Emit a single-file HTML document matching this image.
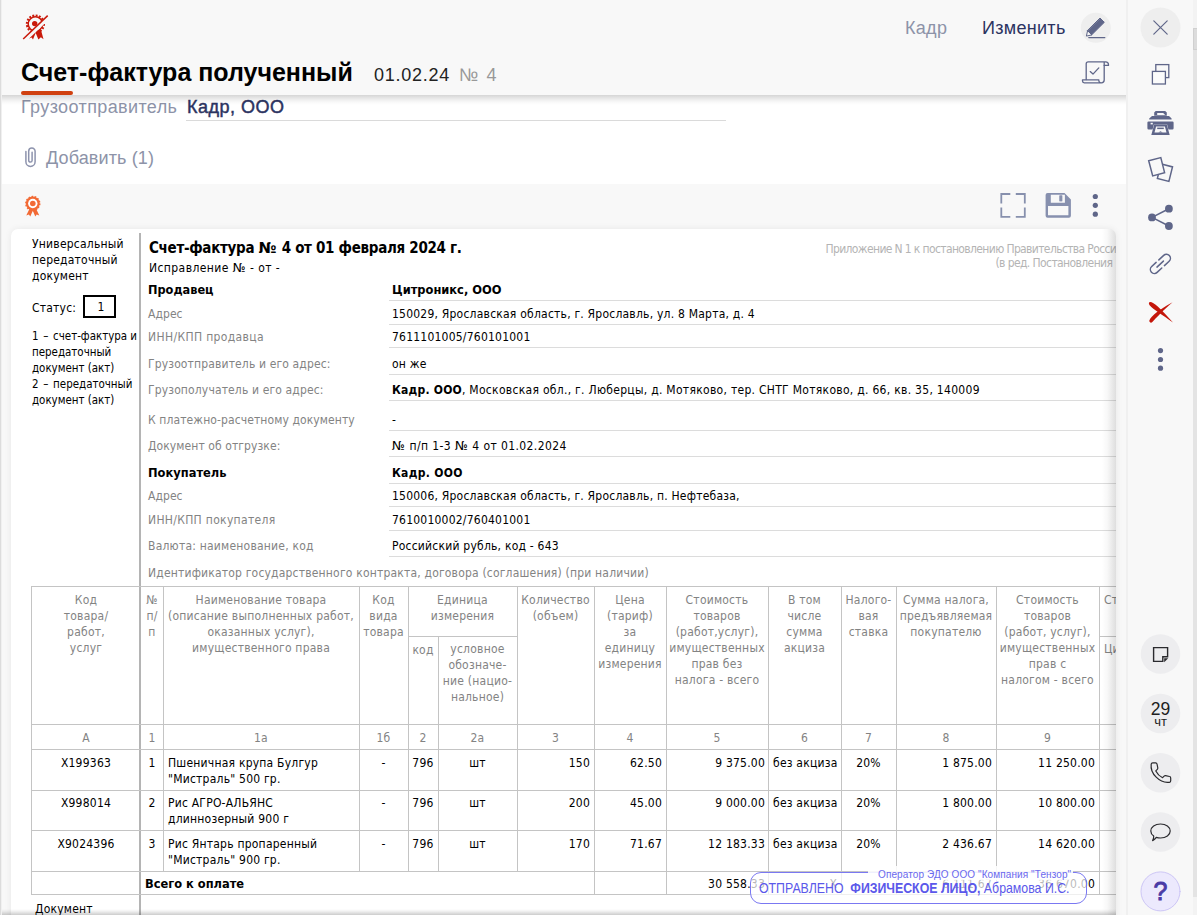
<!DOCTYPE html>
<html lang="ru">
<head>
<meta charset="utf-8">
<title>Счет-фактура полученный</title>
<style>
html,body{margin:0;padding:0}
body{width:1197px;height:915px;overflow:hidden;position:relative;background:#fff;font-family:"Liberation Sans",sans-serif;color:#000}
.abs{position:absolute}
#main{position:absolute;left:0;top:0;width:1126px;height:915px;overflow:hidden;background:#fff}
#leftedge{position:absolute;left:0;top:0;width:1px;height:915px;background:#dcdcdc;border-right:1px solid #f0f0f0;z-index:30}
#hdr{position:absolute;left:0;top:0;width:1126px;height:95px;background:#f8f8f8;z-index:20}
#hdrsh{position:absolute;left:0;top:95px;width:1126px;height:10px;z-index:19;background:linear-gradient(to bottom,rgba(0,0,0,.165),rgba(0,0,0,.11) 25%,rgba(0,0,0,.05) 55%,rgba(0,0,0,.015) 80%,rgba(0,0,0,0))}
.ui{font-family:"Liberation Sans",sans-serif;white-space:nowrap;position:absolute}
#graybg{position:absolute;left:0;top:184px;width:1126px;height:732px;background:#f8f8f8}
#card{position:absolute;left:11px;top:229px;width:1105px;height:700px;background:#fff;border-radius:7px 7px 0 0;overflow:hidden;box-shadow:0 0 7px rgba(0,0,0,.07)}
#cardshadow{position:absolute;right:0;top:0;width:14px;height:100%;background:linear-gradient(to right,rgba(0,0,0,0),rgba(0,0,0,.03) 40%,rgba(0,0,0,.13));z-index:5}
.d{position:absolute;white-space:nowrap;font:12px/16px "DejaVu Sans Condensed","DejaVu Sans","Liberation Sans",sans-serif;letter-spacing:.22px;color:#000}
.g{color:#838383}
.b{font-weight:bold}
.hl{position:absolute;height:1px;background:#dcdcdc;left:378px;width:740px}
#side{position:absolute;left:1126px;top:0;width:71px;height:915px;background:#f8f8f8;border-left:2px solid #f0f0f0;box-sizing:border-box}
.circ{position:absolute;width:40px;height:40px;border-radius:50%;background:#eeeeee}
</style>
</head>
<body>
<div id="main">
  <div id="graybg"></div>

  <!-- white band: consignor + attachments -->
  <div class="ui" style="left:21px;top:97px;font-size:18px;line-height:21px;color:#8d93a8;letter-spacing:.38px">Грузоотправитель</div>
  <div class="ui" style="left:187px;top:97px;font-size:18px;line-height:21px;color:#2b3361;letter-spacing:.5px;-webkit-text-stroke:.45px #2b3361">Кадр, ООО</div>
  <div class="abs" style="left:186px;top:120px;width:540px;height:1px;background:#dadada"></div>
  <div class="ui" style="left:46px;top:148px;font-size:18px;line-height:21px;color:#8d93a8;letter-spacing:.12px">Добавить (1)</div>

<!--ICONS-MAIN-->
<svg class="abs" style="left:0;top:130px;z-index:3" width="1127" height="100" viewBox="0 130 1127 100" fill="none" stroke-linecap="round" stroke-linejoin="round">
  <!-- paperclip -->
  <path d="M25.900 151.600 V161.800 a4.600 4.600 0 0 0 9.200 0 V151.200 a3.200 3.200 0 0 0 -6.400 0 V160.400 a1.700 1.700 0 0 0 3.400 0 V152.200" stroke="#8d93ad" stroke-width="1.500"/>
  <!-- orange rosette -->
  <g fill="#f26a35" stroke="none">
    <path d="M29.600 208.600 L26.300 215.500 L28.900 214.600 L30.300 216.400 L33 210.300Z"/>
    <path d="M36 208.600 L39.300 215.500 L36.700 214.600 L35.300 216.400 L32.600 210.300Z"/>
  </g>
  <circle cx="32.800" cy="203.500" r="6.900" fill="#f26a35" stroke="#f26a35" stroke-width="1.600" stroke-dasharray="1.700 1.400" stroke-linecap="butt"/>
  <circle cx="32.800" cy="203.500" r="4.700" fill="#ffffff"/>
  <circle cx="32.800" cy="203.500" r="2.800" fill="#f26a35"/>
  <!-- fullscreen -->
  <path d="M1001.300 203.500 V194 H1010.300 M1015.800 194 H1024.800 V203.500 M1024.800 207.500 V216.800 H1015.800 M1010.300 216.800 H1001.300 V207.500" stroke="#8790ad" stroke-width="1.800" stroke-linecap="butt" stroke-linejoin="miter"/>
  <!-- save -->
  <path fill-rule="evenodd" fill="#8790ae" stroke="none" d="M1047.600 193 H1064.500 L1070.900 199.400 V215.800 a2 2 0 0 1 -2 2 H1047.600 a2 2 0 0 1 -2 -2 V195 a2 2 0 0 1 2 -2Z M1050.800 194.800 V202.800 H1064.900 V194.800Z M1059.500 195.500 H1062.200 V201.200 H1059.500Z M1048 206 V215.200 H1068.400 V206Z"/>
  <rect x="1059.500" y="195.500" width="2.700" height="5.700" fill="#8790ae"/>
  <!-- dots -->
  <g fill="#5f6689"><circle cx="1095.300" cy="196.500" r="2.600"/><circle cx="1095.300" cy="205.300" r="2.600"/><circle cx="1095.300" cy="214.200" r="2.600"/></g>
</svg>
  <!-- document card -->
  <div id="card">
    <div id="cardshadow"></div>
    <div id="doc" class="abs" style="left:-11px;top:-229px;width:1300px;height:1000px">
<!--DOCSTART-->
<div class="d " style="left:32px;top:236px;">Универсальный<br>передаточный<br>документ</div>
<div class="d " style="left:32px;top:300px;">Статус:</div>
<div class="d" style="left:83px;top:295px;width:29px;height:19px;border:2px solid #000;text-align:center;line-height:21px;text-indent:3px">1</div>
<div class="d " style="left:32px;top:328px;letter-spacing:0;transform-origin:0 0;transform:scaleX(.953)"><span style="word-spacing:1.5px">1 – </span>счет-фактура и<br>передаточный<br>документ (акт)<br><span style="word-spacing:1.5px">2 – </span>передаточный<br>документ (акт)</div>
<div class="abs" style="left:139px;top:233px;width:2px;height:707px;background:#b4b4b4"></div>
<div class="d b" style="left:149px;top:238.5px;font-size:15px;line-height:18px;letter-spacing:-.3px">Счет-фактура <span style="font-family:'DejaVu Sans',sans-serif;letter-spacing:.6px">№</span> 4 от 01 февраля 2024 г.</div>
<div class="d " style="left:149px;top:259.5px;letter-spacing:.42px">Исправление <span style="font-family:'DejaVu Sans',sans-serif;font-size:12.5px;letter-spacing:.6px">№</span> - от -</div>
<div class="d" style="left:825.5px;top:242.3px;font-size:12px;line-height:14px;color:#b4b4b4;letter-spacing:-.63px">Приложение N 1 к постановлению Правительства Российской Федерации от 26 декабря 2011 г. N 1137</div>
<div class="d" style="left:995.5px;top:256px;font-size:12px;line-height:14px;color:#b4b4b4;letter-spacing:-.6px">(в ред. Постановления &nbsp;Правительства РФ от 02.04.2021 N 534)</div>
<div class="d " style="left:148px;top:281.5px;letter-spacing:0px"><b style="display:inline-block;font-family:'DejaVu Sans',sans-serif;letter-spacing:0;transform-origin:0 50%;transform:scaleX(0.945)">Продавец</b></div>
<div class="d " style="left:392px;top:281.5px;"><b style="display:inline-block;font-family:'DejaVu Sans',sans-serif;letter-spacing:0;transform-origin:0 50%;transform:scaleX(0.955)">Цитроникс, ООО</b></div>
<div class="abs" style="left:389px;top:300px;width:911px;height:1px;background:#dcdcdc"></div>
<div class="d g" style="left:148px;top:306px;letter-spacing:0.06px">Адрес</div>
<div class="d " style="left:392px;top:306px;">150029, Ярославская область, г. Ярославль, ул. 8 Марта, д. 4</div>
<div class="abs" style="left:389px;top:324px;width:911px;height:1px;background:#dcdcdc"></div>
<div class="d g" style="left:148px;top:329px;letter-spacing:0.36px">ИНН/КПП продавца</div>
<div class="d " style="left:392px;top:329px;">7611101005/760101001</div>
<div class="abs" style="left:389px;top:347px;width:911px;height:1px;background:#dcdcdc"></div>
<div class="d g" style="left:148px;top:355.5px;letter-spacing:0.14px">Грузоотправитель и его адрес:</div>
<div class="d " style="left:392px;top:355.5px;">он же</div>
<div class="abs" style="left:389px;top:374px;width:911px;height:1px;background:#dcdcdc"></div>
<div class="d g" style="left:148px;top:382px;letter-spacing:0.14px">Грузополучатель и его адрес:</div>
<div class="d " style="left:392px;top:382px;"><b style="letter-spacing:0.22px">Кадр. ООО</b><span style="letter-spacing:.29px">, Московская обл., г. Люберцы, д. Мотяково, тер. СНТГ Мотяково, д. 66, кв. 35, 140009</span></div>
<div class="abs" style="left:389px;top:400px;width:911px;height:1px;background:#dcdcdc"></div>
<div class="d g" style="left:148px;top:411.7px;letter-spacing:0.1px">К платежно-расчетному документу</div>
<div class="d " style="left:392px;top:411.7px;">-</div>
<div class="abs" style="left:389px;top:430px;width:911px;height:1px;background:#dcdcdc"></div>
<div class="d g" style="left:148px;top:437.7px;letter-spacing:0.09px">Документ об отгрузке:</div>
<div class="d " style="left:392px;top:437.7px;"><span style="letter-spacing:.4px"><span style="font-family:'DejaVu Sans',sans-serif;font-size:12.5px;letter-spacing:.6px">№</span> п/п 1-3 <span style="font-family:'DejaVu Sans',sans-serif;font-size:12.5px;letter-spacing:.6px">№</span> 4 от 01.02.2024</span></div>
<div class="abs" style="left:389px;top:456px;width:911px;height:1px;background:#dcdcdc"></div>
<div class="d " style="left:148px;top:464.5px;letter-spacing:0px"><b style="display:inline-block;font-family:'DejaVu Sans',sans-serif;letter-spacing:0;transform-origin:0 50%;transform:scaleX(0.956)">Покупатель</b></div>
<div class="d " style="left:392px;top:464.5px;"><b style="letter-spacing:0.3px">Кадр. ООО</b></div>
<div class="abs" style="left:389px;top:483px;width:911px;height:1px;background:#dcdcdc"></div>
<div class="d g" style="left:148px;top:487.7px;letter-spacing:0.06px">Адрес</div>
<div class="d " style="left:392px;top:487.7px;">150006, Ярославская область, г. Ярославль, п. Нефтебаза,</div>
<div class="abs" style="left:389px;top:506px;width:911px;height:1px;background:#dcdcdc"></div>
<div class="d g" style="left:148px;top:511.5px;letter-spacing:0.31px">ИНН/КПП покупателя</div>
<div class="d " style="left:392px;top:511.5px;">7610010002/760401001</div>
<div class="abs" style="left:389px;top:530px;width:911px;height:1px;background:#dcdcdc"></div>
<div class="d g" style="left:148px;top:537.7px;letter-spacing:0.22px">Валюта: наименование, код</div>
<div class="d " style="left:392px;top:537.7px;">Российский рубль, код - 643</div>
<div class="abs" style="left:389px;top:556px;width:911px;height:1px;background:#dcdcdc"></div>
<div class="d g" style="left:148px;top:564.7px;letter-spacing:0.19px">Идентификатор государственного контракта, договора (соглашения) (при наличии)</div>
<div class="abs" style="left:31px;top:586px;width:1269px;height:1px;background:#c4c4c4"></div>
<div class="abs" style="left:31px;top:724px;width:1269px;height:1px;background:#c4c4c4"></div>
<div class="abs" style="left:31px;top:749px;width:1269px;height:1px;background:#c4c4c4"></div>
<div class="abs" style="left:31px;top:790px;width:1269px;height:1px;background:#c4c4c4"></div>
<div class="abs" style="left:31px;top:830px;width:1269px;height:1px;background:#c4c4c4"></div>
<div class="abs" style="left:31px;top:871px;width:1269px;height:1px;background:#c4c4c4"></div>
<div class="abs" style="left:31px;top:894px;width:1269px;height:1px;background:#c4c4c4"></div>
<div class="abs" style="left:408px;top:636px;width:109px;height:1px;background:#c4c4c4"></div>
<div class="abs" style="left:1099px;top:636px;width:201px;height:1px;background:#c4c4c4"></div>
<div class="abs" style="left:31px;top:586px;width:1px;height:309px;background:#c4c4c4"></div>
<div class="abs" style="left:163px;top:586px;width:1px;height:285px;background:#c4c4c4"></div>
<div class="abs" style="left:359px;top:586px;width:1px;height:285px;background:#c4c4c4"></div>
<div class="abs" style="left:408px;top:586px;width:1px;height:285px;background:#c4c4c4"></div>
<div class="abs" style="left:517px;top:586px;width:1px;height:285px;background:#c4c4c4"></div>
<div class="abs" style="left:594px;top:586px;width:1px;height:309px;background:#c4c4c4"></div>
<div class="abs" style="left:666px;top:586px;width:1px;height:309px;background:#c4c4c4"></div>
<div class="abs" style="left:768px;top:586px;width:1px;height:309px;background:#c4c4c4"></div>
<div class="abs" style="left:841px;top:586px;width:1px;height:309px;background:#c4c4c4"></div>
<div class="abs" style="left:896px;top:586px;width:1px;height:309px;background:#c4c4c4"></div>
<div class="abs" style="left:996px;top:586px;width:1px;height:309px;background:#c4c4c4"></div>
<div class="abs" style="left:1099px;top:586px;width:1px;height:309px;background:#c4c4c4"></div>
<div class="abs" style="left:438px;top:636px;width:1px;height:235px;background:#c4c4c4"></div>
<div class="d g" style="left:32px;top:592px;width:108px;text-align:center;">Код<br>товара/<br>работ,<br>услуг</div>
<div class="d g" style="left:141px;top:592px;width:22px;text-align:center;">№<br>п/<br>п</div>
<div class="d g" style="left:163px;top:592px;width:196px;text-align:center;">Наименование товара<br>(описание выполненных работ,<br>оказанных услуг),<br>имущественного права</div>
<div class="d g" style="left:359px;top:592px;width:49px;text-align:center;">Код<br>вида<br>товара</div>
<div class="d g" style="left:408px;top:592px;width:109px;text-align:center;">Единица<br>измерения</div>
<div class="d g" style="left:408px;top:642px;width:30px;text-align:center;">код</div>
<div class="d g" style="left:438px;top:641px;width:79px;text-align:center;">условное<br>обозначе-<br>ние (нацио-<br>нальное)</div>
<div class="d g" style="left:517px;top:592px;width:77px;text-align:center;">Количество<br>(объем)</div>
<div class="d g" style="left:594px;top:592px;width:72px;text-align:center;">Цена<br>(тариф)<br>за<br>единицу<br>измерения</div>
<div class="d g" style="left:666px;top:592px;width:102px;text-align:center;">Стоимость<br>товаров<br>(работ,услуг),<br>имущественных<br>прав без<br>налога - всего</div>
<div class="d g" style="left:768px;top:592px;width:73px;text-align:center;">В том<br>числе<br>сумма<br>акциза</div>
<div class="d g" style="left:841px;top:592px;width:55px;text-align:center;">Налого-<br>вая<br>ставка</div>
<div class="d g" style="left:896px;top:592px;width:100px;text-align:center;">Сумма налога,<br>предъявляемая<br>покупателю</div>
<div class="d g" style="left:996px;top:592px;width:103px;text-align:center;">Стоимость<br>товаров<br>(работ, услуг),<br>имущественных<br>прав с<br>налогом - всего</div>
<div class="d g" style="left:1104px;top:592px;width:156px;text-align:left;">Страна происхождения товара</div>
<div class="d g" style="left:1104px;top:641px;width:76px;text-align:left;">Цифровой код</div>
<div class="d g" style="left:32px;top:730px;width:108px;text-align:center;">А</div>
<div class="d g" style="left:141px;top:730px;width:22px;text-align:center;">1</div>
<div class="d g" style="left:163px;top:730px;width:196px;text-align:center;">1а</div>
<div class="d g" style="left:359px;top:730px;width:49px;text-align:center;">1б</div>
<div class="d g" style="left:408px;top:730px;width:30px;text-align:center;">2</div>
<div class="d g" style="left:438px;top:730px;width:79px;text-align:center;">2а</div>
<div class="d g" style="left:517px;top:730px;width:77px;text-align:center;">3</div>
<div class="d g" style="left:594px;top:730px;width:72px;text-align:center;">4</div>
<div class="d g" style="left:666px;top:730px;width:102px;text-align:center;">5</div>
<div class="d g" style="left:768px;top:730px;width:73px;text-align:center;">6</div>
<div class="d g" style="left:841px;top:730px;width:55px;text-align:center;">7</div>
<div class="d g" style="left:896px;top:730px;width:100px;text-align:center;">8</div>
<div class="d g" style="left:996px;top:730px;width:103px;text-align:center;">9</div>
<div class="d g" style="left:1099px;top:730px;width:81px;text-align:center;">10</div>
<div class="d " style="left:32px;top:755px;width:108px;text-align:center;">Х199363</div>
<div class="d " style="left:141px;top:755px;width:22px;text-align:center;">1</div>
<div class="d " style="left:168px;top:755px;width:186px;text-align:left;">Пшеничная крупа Булгур<br>"Мистраль" 500 гр.</div>
<div class="d " style="left:359px;top:755px;width:49px;text-align:center;">-</div>
<div class="d " style="left:408px;top:755px;width:30px;text-align:center;">796</div>
<div class="d " style="left:438px;top:755px;width:79px;text-align:center;">шт</div>
<div class="d " style="left:521px;top:755px;width:69px;text-align:right;">150</div>
<div class="d " style="left:598px;top:755px;width:64px;text-align:right;">62.50</div>
<div class="d " style="left:669px;top:755px;width:96px;text-align:right;">9 375.00</div>
<div class="d " style="left:773px;top:755px;width:63px;text-align:left;">без акциза</div>
<div class="d " style="left:841px;top:755px;width:55px;text-align:center;">20%</div>
<div class="d " style="left:900px;top:755px;width:92px;text-align:right;">1 875.00</div>
<div class="d " style="left:1000px;top:755px;width:95px;text-align:right;">11 250.00</div>
<div class="d " style="left:1099px;top:755px;width:81px;text-align:center;">643</div>
<div class="d " style="left:32px;top:795px;width:108px;text-align:center;">Х998014</div>
<div class="d " style="left:141px;top:795px;width:22px;text-align:center;">2</div>
<div class="d " style="left:168px;top:795px;width:186px;text-align:left;">Рис АГРО-АЛЬЯНС<br>длиннозерный 900 г</div>
<div class="d " style="left:359px;top:795px;width:49px;text-align:center;">-</div>
<div class="d " style="left:408px;top:795px;width:30px;text-align:center;">796</div>
<div class="d " style="left:438px;top:795px;width:79px;text-align:center;">шт</div>
<div class="d " style="left:521px;top:795px;width:69px;text-align:right;">200</div>
<div class="d " style="left:598px;top:795px;width:64px;text-align:right;">45.00</div>
<div class="d " style="left:669px;top:795px;width:96px;text-align:right;">9 000.00</div>
<div class="d " style="left:773px;top:795px;width:63px;text-align:left;">без акциза</div>
<div class="d " style="left:841px;top:795px;width:55px;text-align:center;">20%</div>
<div class="d " style="left:900px;top:795px;width:92px;text-align:right;">1 800.00</div>
<div class="d " style="left:1000px;top:795px;width:95px;text-align:right;">10 800.00</div>
<div class="d " style="left:1099px;top:795px;width:81px;text-align:center;">643</div>
<div class="d " style="left:32px;top:835.7px;width:108px;text-align:center;">Х9024396</div>
<div class="d " style="left:141px;top:835.7px;width:22px;text-align:center;">3</div>
<div class="d " style="left:168px;top:835.7px;width:186px;text-align:left;">Рис Янтарь пропаренный<br>"Мистраль" 900 гр.</div>
<div class="d " style="left:359px;top:835.7px;width:49px;text-align:center;">-</div>
<div class="d " style="left:408px;top:835.7px;width:30px;text-align:center;">796</div>
<div class="d " style="left:438px;top:835.7px;width:79px;text-align:center;">шт</div>
<div class="d " style="left:521px;top:835.7px;width:69px;text-align:right;">170</div>
<div class="d " style="left:598px;top:835.7px;width:64px;text-align:right;">71.67</div>
<div class="d " style="left:669px;top:835.7px;width:96px;text-align:right;">12 183.33</div>
<div class="d " style="left:773px;top:835.7px;width:63px;text-align:left;">без акциза</div>
<div class="d " style="left:841px;top:835.7px;width:55px;text-align:center;">20%</div>
<div class="d " style="left:900px;top:835.7px;width:92px;text-align:right;">2 436.67</div>
<div class="d " style="left:1000px;top:835.7px;width:95px;text-align:right;">14 620.00</div>
<div class="d " style="left:1099px;top:835.7px;width:81px;text-align:center;">643</div>
<div class="d" style="left:145px;top:876px"><b style="display:inline-block;font-family:'DejaVu Sans',sans-serif;letter-spacing:0;transform-origin:0 50%;transform:scaleX(0.953)">Всего к оплате</b></div>
<div class="d " style="left:669px;top:876px;width:96px;text-align:right;">30 558.33</div>
<div class="d " style="left:772px;top:876px;width:65px;text-align:right;">Х</div>
<div class="d " style="left:900px;top:876px;width:92px;text-align:right;">6 111.67</div>
<div class="d " style="left:1000px;top:876px;width:95px;text-align:right;">36 670.00</div>
<div class="d " style="left:35px;top:901px;">Документ</div>
<!-- stamp -->
<div class="abs" style="left:750px;top:872px;width:335px;height:30px;border:1px solid #7a78f2;border-radius:11px;background:rgba(255,255,255,.72);z-index:8"></div>
<div class="abs" style="left:868px;top:866px;width:205px;height:14px;background:rgba(255,255,255,.88);border-radius:5px;z-index:9"></div>
<div class="abs" style="left:878px;top:869px;z-index:10;white-space:nowrap;font:10px/12px 'Liberation Sans',sans-serif;color:#6a68ee;letter-spacing:.1px">Оператор ЭДО ООО "Компания "Тензор"</div>
<div class="abs" style="left:759px;top:878.5px;z-index:10;white-space:nowrap;font:15px/18px 'Liberation Sans',sans-serif;color:#5b58ea;transform-origin:0 0;transform:scaleX(.822)">ОТПРАВЛЕНО&nbsp; <b>ФИЗИЧЕСКОЕ ЛИЦО,</b> Абрамова И.С.</div>
<!--DOCEND-->
    </div>
  </div>

  <div class="abs" style="left:0;top:909px;width:1116px;height:6px;z-index:15;background:linear-gradient(to bottom,rgba(0,0,0,0),rgba(0,0,0,.05) 35%,rgba(0,0,0,.2))"></div>
  <div id="hdrsh"></div>
  <div id="hdr">
    <!--ICONS-HDR-->
<svg class="abs" style="left:0;top:0" width="1127" height="95" viewBox="0 0 1127 95" fill="none" stroke-linecap="round" stroke-linejoin="round">
  <!-- crossed rosette -->
  <g fill="#c9190a" stroke="none">
    <path d="M32.500 30.500 L35.800 32.500 L33 39.600 L31.600 37.600 L29 38.600Z"/>
    <path d="M36.400 30.800 L40.800 29.300 L43.500 39.200 L40.900 37.300 L38.400 39.500 L35.600 32.800Z"/>
  </g>
  <circle cx="35.400" cy="24" r="8.500" stroke="#c9190a" stroke-width="2.200" stroke-dasharray="1.900 1.440" stroke-linecap="butt"/>
  <circle cx="35.400" cy="24" r="7.200" stroke="#c9190a" stroke-width="1.500"/>
  <circle cx="34.700" cy="23.600" r="2.700" fill="#c9190a"/>
  <path d="M24.700 40.100 L49.200 16.700" stroke="#f8f8f8" stroke-width="3.800" stroke-linecap="butt"/>
  <path d="M23.200 39 L47.700 15.600" stroke="#c9190a" stroke-width="1.500" stroke-linecap="butt"/>
  <!-- pencil -->
  <circle cx="1095.800" cy="27.800" r="15" fill="#eeeeee"/>
  <path d="M1100.300 18.300 L1104.300 22.300 L1091.500 35 L1087.500 31Z" fill="#5f6689" stroke="#5f6689" stroke-width="1"/>
  <path d="M1087.500 31 L1086.400 36.100 L1091.500 35Z" fill="#f4f4f4" stroke="#5f6689" stroke-width="1"/>
  <path d="M1088.800 37.600 H1104.800" stroke="#5f6689" stroke-width="1.300"/>
  <!-- scroll with check -->
  <g stroke="#5f6689" stroke-width="1.300">
    <path d="M1086.200 79.600 V63.800 a2 2 0 0 1 2 -2 H1105.500 a3 3 0 0 1 3 3 V65.400 H1104.200 V61.900"/>
    <path d="M1104.200 65.400 V80 a2.800 2.800 0 0 1 -2.800 2.800 H1084.300 a1.800 1.800 0 0 1 -1.800 -1.800 V79.800 H1098.800 V80.600 a2.200 2.200 0 0 0 2.200 2.200"/>
    <path d="M1090.200 71.600 L1093 74.100 L1098.800 67.900"/>
  </g>
</svg>
    <div class="ui" style="left:21px;top:57.8px;font-size:25px;line-height:28px;font-weight:bold;letter-spacing:0;color:#000">Счет-фактура полученный</div>
    <div class="abs" style="left:21px;top:91px;width:52px;height:4px;border-radius:2px;background:#d0400f"></div>
    <div class="ui" style="left:374px;top:64.5px;font-size:18px;line-height:21px;color:#222;letter-spacing:.75px">01.02.24</div>
    <div class="ui" style="left:459px;top:64.5px;font-size:18px;line-height:21px;color:#999;letter-spacing:1.6px">№ 4</div>
    <div class="ui" style="left:905px;top:18px;font-size:18px;line-height:21px;color:#8d93a8;letter-spacing:.3px">Кадр</div>
    <div class="ui" style="left:982px;top:18px;font-size:18px;line-height:21px;color:#2b3361;letter-spacing:.3px">Изменить</div>
  </div>
</div>
<div id="leftedge"></div>

<div id="side">
<!--SIDESTART-->
<svg class="abs" style="left:-1px;top:0" width="70" height="915" viewBox="1127 0 70 915" fill="none" stroke="#5f6689" stroke-width="1.3" stroke-linecap="round" stroke-linejoin="round">
  <!-- close -->
  <circle cx="1160.500" cy="27.500" r="20" fill="#eeeeee" stroke="none"/>
  <path d="M1153.800 20.800 L1167.200 34.200 M1167.200 20.800 L1153.800 34.200" stroke-width="1.200"/>
  <!-- copy -->
  <rect x="1155.8" y="64.6" width="13" height="13" stroke-linejoin="miter"/>
  <rect x="1152.4" y="71.4" width="13" height="12.6" fill="#fbfbfb" stroke-linejoin="miter"/>
  <!-- printer -->
  <g stroke="none" fill="#5f6689">
    <path d="M1155.6 111 h9.6 l1.6 1.4 v3.4 h-12.6 v-3.4z"/>
    <path d="M1157.2 113 h6 l2 2 h-8z" fill="#f8f8f8"/>
    <path d="M1152 116 h17 l2.6 2.4 v1.2 h-22.4 v-1.2z"/>
    <path d="M1148.6 121.4 h23.8 a1.2 1.2 0 0 1 1.2 1.2 v5.6 a1.2 1.2 0 0 1 -1.2 1.2 h-4 l-1.3-5 h-13.2 l-1.3 5 h-4 a1.2 1.2 0 0 1 -1.2-1.2 v-5.6 a1.2 1.2 0 0 1 1.2-1.2z"/>
    <rect x="1150.6" y="122.8" width="2.2" height="1.6" fill="#f8f8f8"/>
    <path d="M1154.200 124.600 h12.600 l2.900 10.400 h-18.400z M1156.100 126.600 l-1.600 5.900 h12 l-1.600 -5.900z" fill-rule="evenodd"/>
    <rect x="1157.200" y="127.600" width="6.600" height="1.500"/>
    <path d="M1158.300 132.600 l2.200 -1.300 l2.200 1.300z"/>
  </g>
  <!-- pages -->
  <path d="M1162.400 164.300 L1172.500 166.900 L1168.900 181.400 L1157.400 178.400 L1158.200 175" stroke-linejoin="miter" stroke-width="1.500"/>
  <path d="M1148.700 160.700 L1160.800 157.600 L1164.600 172.600 L1152.700 175.900Z" fill="#f8f8f8" stroke-linejoin="miter" stroke-width="1.500"/>
  <!-- share -->
  <path d="M1168.900 208.700 L1152 217.400 L1168.900 226" stroke-width="1.6"/>
  <g stroke="none" fill="#5f6689"><circle cx="1152" cy="217.400" r="3.900"/><circle cx="1168.900" cy="208.700" r="3.900"/><circle cx="1168.900" cy="226" r="3.900"/></g>
  <!-- link -->
  <g transform="translate(1160.400 263.900) rotate(-42.800)" stroke-width="1.500">
    <path d="M1.600 -4 H8.200 a4 4 0 0 1 0 8 H1.800"/>
    <path d="M-1.800 4 H-8.200 a4 4 0 0 1 0 -8 H-2.100"/>
    <path d="M-4.700 0 H4.100"/>
  </g>
  <!-- red x -->
  <g stroke="none" fill="#c4160a">
    <path d="M1150.200 302 C1153.500 302,1161 308.500,1173 322.600 C1162 314,1153.500 310,1149.600 305.200 C1148.400 303.600,1148.800 302,1150.200 302Z"/>
    <path d="M1149.400 321.600 C1148.200 319,1156 311,1172.600 302.200 C1163 310.500,1156 318,1152.600 321.800 C1151.400 323,1150 322.900,1149.400 321.600Z"/>
  </g>
  <!-- dots -->
  <g stroke="none" fill="#5f6689"><circle cx="1160.500" cy="350.600" r="2.600"/><circle cx="1160.500" cy="359.500" r="2.600"/><circle cx="1160.500" cy="368.200" r="2.600"/></g>
  <!-- bottom circles -->
  <g stroke="none" fill="#ededef">
    <circle cx="1160.500" cy="654" r="19.800"/><circle cx="1160.500" cy="713.500" r="19.800"/><circle cx="1160.500" cy="772.800" r="19.800"/><circle cx="1160.500" cy="832" r="19.800"/>
  </g>
  <circle cx="1160.500" cy="891.400" r="19.500" fill="#ece9fd" stroke="#cdc6f6" stroke-width="1"/>
  <!-- note -->
  <path d="M1153.600 647.600 H1167.600 V656.800 H1162.800 V661.400 H1153.600Z" stroke="#2a2a2e" stroke-width="1.400" stroke-linejoin="miter" stroke-linecap="butt"/>
  <path d="M1164.200 658.200 H1168.200 L1164.200 662.200Z" fill="#2a2a2e" stroke="none"/>
  <!-- phone -->
  <path d="M1151.200 764 C1150.600 768.500,1152.500 773.500,1156.200 777.200 C1159.900 780.900,1165 782.900,1169.400 782.300 C1170.200 782.200,1170.700 781.600,1170.700 780.800 V777.900 C1170.700 777.200,1170.200 776.600,1169.500 776.500 L1165.600 775.700 C1165 775.600,1164.500 775.800,1164.100 776.200 L1162.600 777.700 C1159.800 776.300,1157.200 773.700,1155.800 770.900 L1157.300 769.400 C1157.700 769,1157.900 768.500,1157.800 767.900 L1157 764 C1156.900 763.300,1156.300 762.800,1155.600 762.800 H1152.700 C1151.900 762.800,1151.300 763.300,1151.200 764Z" stroke="#2a2a2e" stroke-width="1.200"/>
  <!-- chat -->
  <path d="M1160.500 824 C1166 824,1170.200 827,1170.200 831 C1170.200 835,1166 838,1160.500 838 C1159 838,1157.600 837.800,1156.300 837.400 C1155.300 838.800,1154 839.900,1152.600 840.600 C1153.400 839.300,1153.800 837.600,1153.700 836.100 C1151.900 834.800,1150.800 833,1150.800 831 C1150.800 827,1155 824,1160.500 824Z" stroke="#2a2a2e" stroke-width="1.200"/>
</svg>
<div class="ui" style="left:12.5px;top:699px;width:40px;text-align:center;font-size:17.500px;line-height:20px;color:#1e1e22">29</div>
<div class="ui" style="left:12.5px;top:714px;width:40px;text-align:center;font-size:13px;line-height:16px;color:#1e1e22">чт</div>
<div class="ui" style="left:12.5px;top:877px;width:40px;text-align:center;font-size:25px;line-height:28px;color:#4a3ba6;-webkit-text-stroke:.9px #4a3ba6">?</div>
<div class="abs" style="left:65px;top:0;width:5px;height:915px;background:#f3f3f3"></div>
<div class="abs" style="left:65px;top:50px;width:5px;height:847px;background:#e4e4e4"></div>
<div class="abs" style="left:65px;top:28px;width:5px;height:22px;background:#dcdcdc;border:1px solid #d0d0d0;border-right:0;box-sizing:border-box"></div>
<!--SIDEEND-->
</div>
</body>
</html>
